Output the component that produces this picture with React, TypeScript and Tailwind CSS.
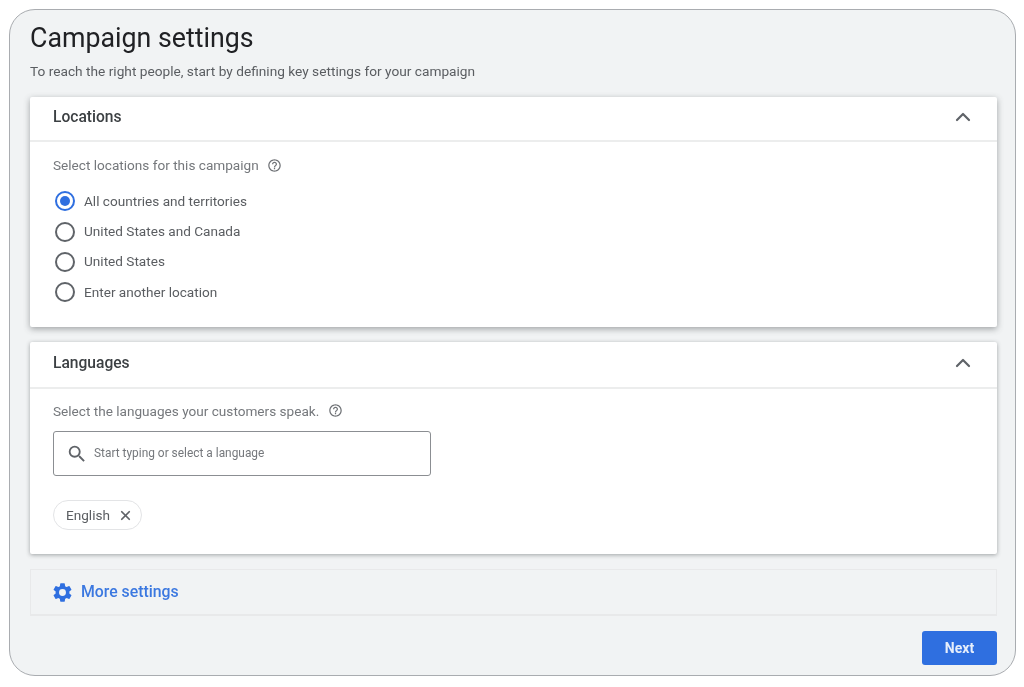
import { ChevronUp, X } from "lucide-react";

function Help({ className = "" }: { className?: string }) {
  return (
    <svg viewBox="0 0 24 24" className={`h-[15px] w-[15px] fill-[#6f7276] ${className}`}>
      <path d="M11 18h2v-2h-2v2zm1-16C6.48 2 2 6.48 2 12s4.48 10 10 10 10-4.48 10-10S17.52 2 12 2zm0 18c-4.41 0-8-3.59-8-8s3.59-8 8-8 8 3.59 8 8-3.59 8-8 8zm0-14c-2.21 0-4 1.79-4 4h2c0-1.1.9-2 2-2s2 .9 2 2c0 2-3 1.75-3 5h2c0-2.25 3-2.5 3-5 0-2.21-1.79-4-4-4z" />
    </svg>
  );
}

function Radio({ label, checked = false }: { label: string; checked?: boolean }) {
  return (
    <div className="flex h-[30.4px] items-center">
      <span
        className={`ml-[2px] flex h-[20px] w-[20px] items-center justify-center rounded-full border-2 ${
          checked ? "border-[#2f6fe0]" : "border-[#5f6368]"
        }`}
      >
        {checked && <span className="h-[10px] w-[10px] rounded-full bg-[#2f6fe0]" />}
      </span>
      <span className="ml-[9px] -mt-[1px] text-[13.6px] text-[#5a5d61]">{label}</span>
    </div>
  );
}

function CardHeader({ title, tall = false }: { title: string; tall?: boolean }) {
  return (
    <div
      className={`flex items-center justify-between border-b-2 border-[#eceded] pl-[23px] pr-[22px] ${
        tall ? "h-[47px] pb-[1px]" : "h-[45px] pb-[2px]"
      }`}
    >
      <span className="text-[15.6px] font-medium text-[#3c4043]">{title}</span>
      <ChevronUp className={`h-[24px] w-[24px] text-[#5f6368] ${tall ? "-mt-[2px]" : "-mt-[1px]"}`} strokeWidth={2.2} />
    </div>
  );
}

export default function App() {
  return (
    <div className="h-[687px] w-[1024px] bg-white pb-[11px] pl-[9px] pr-[8px] pt-[9px] font-['Roboto',sans-serif] blur-[0.4px]">
      <div className="flex h-full flex-col rounded-[26px] border border-[#a9acb0] bg-[#f1f3f4] pl-[20px] pr-[18px]">
        <h1 className="mt-[11px] text-[26.75px] leading-[34px] text-[#202124]">Campaign settings</h1>
        <p className="mt-[8px] text-[13.7px] leading-[17px] text-[#5a5d61]">
          To reach the right people, start by defining key settings for your campaign
        </p>

        <section className="mt-[17px] h-[230px] rounded-[2px] bg-white shadow-[0_2px_6px_rgba(60,64,67,0.45)]">
          <CardHeader title="Locations" />
          <div className="pl-[23px] pt-[15px]">
            <div className="flex items-center gap-[8px] text-[13.6px] leading-[17px] text-[#75787c]">
              <span>Select locations for this campaign</span>
              <Help />
            </div>
            <div className="mt-[12px]">
              <Radio label="All countries and territories" checked />
              <Radio label="United States and Canada" />
              <Radio label="United States" />
              <Radio label="Enter another location" />
            </div>
          </div>
        </section>

        <section className="mt-[15px] h-[212px] rounded-[2px] bg-white shadow-[0_1px_4px_rgba(60,64,67,0.45)]">
          <CardHeader title="Languages" tall />
          <div className="pl-[23px] pt-[14px]">
            <div className="flex items-center gap-[9px] text-[13.6px] leading-[17px] text-[#75787c]">
              <span>Select the languages your customers speak.</span>
              <Help className="-mt-[2px]" />
            </div>
            <div className="mt-[11px] flex h-[45px] w-[378px] items-center rounded-[3px] border border-[#8b8e92] pl-[12px]">
              <svg viewBox="0 0 24 24" className="h-[22px] w-[22px] fill-[#5f6368]">
                <path d="M15.5 14h-.79l-.28-.27A6.47 6.47 0 0 0 16 9.5 6.5 6.5 0 1 0 9.5 16c1.61 0 3.09-.59 4.23-1.57l.27.28v.79l5 4.99L20.49 19l-4.99-5zm-6 0C7.01 14 5 11.99 5 9.5S7.01 5 9.5 5 14 7.01 14 9.5 11.99 14 9.5 14z" />
              </svg>
              <span className="ml-[6px] text-[11.9px] text-[#75787c]">Start typing or select a language</span>
            </div>
            <div className="mt-[24px] flex h-[30px] w-[89px] items-center rounded-full border border-[#e3e4e6] pl-[12px]">
              <span className="text-[13.6px] text-[#5a5d61]">English</span>
              <X className="ml-[8px] h-[15px] w-[15px] text-[#5f6368]" strokeWidth={2.8} />
            </div>
          </div>
        </section>

        <div className="mt-[15px] flex h-[47px] items-center border border-b-2 border-[#e8e9ea] pl-[20px]">
          <svg viewBox="0 0 24 24" className="h-[23px] w-[23px] fill-[#2f6fe0]">
            <path fillRule="evenodd" d="M19.14 12.94c.04-.3.06-.61.06-.94s-.02-.64-.07-.94l2.03-1.58a.49.49 0 0 0 .12-.61l-1.92-3.32a.49.49 0 0 0-.59-.22l-2.39.96a7 7 0 0 0-1.62-.94l-.36-2.54a.48.48 0 0 0-.48-.41h-3.84a.47.47 0 0 0-.47.41l-.36 2.54c-.59.24-1.13.57-1.62.94l-2.39-.96a.48.48 0 0 0-.59.22L2.74 8.87a.47.47 0 0 0 .12.61l2.03 1.58c-.05.3-.09.63-.09.94s.02.64.07.94l-2.03 1.58a.49.49 0 0 0-.12.61l1.92 3.32c.12.22.37.29.59.22l2.39-.96c.5.38 1.03.7 1.62.94l.36 2.54c.05.24.24.41.48.41h3.84c.24 0 .44-.17.47-.41l.36-2.54a7 7 0 0 0 1.62-.94l2.39.96c.22.08.47 0 .59-.22l1.92-3.32a.47.47 0 0 0-.12-.61l-2.01-1.58zM12 15.6A3.6 3.6 0 1 1 12 8.4a3.6 3.6 0 0 1 0 7.2z" />
          </svg>
          <span className="ml-[7px] text-[15.8px] font-medium text-[#3b78e0]">More settings</span>
        </div>

        <div className="mt-[15px] flex justify-end">
          <button className="h-[34px] w-[75px] rounded-[3px] bg-[#2f6fe0] text-[14px] font-bold text-[#e6eefb]">Next</button>
        </div>
      </div>
    </div>
  );
}
